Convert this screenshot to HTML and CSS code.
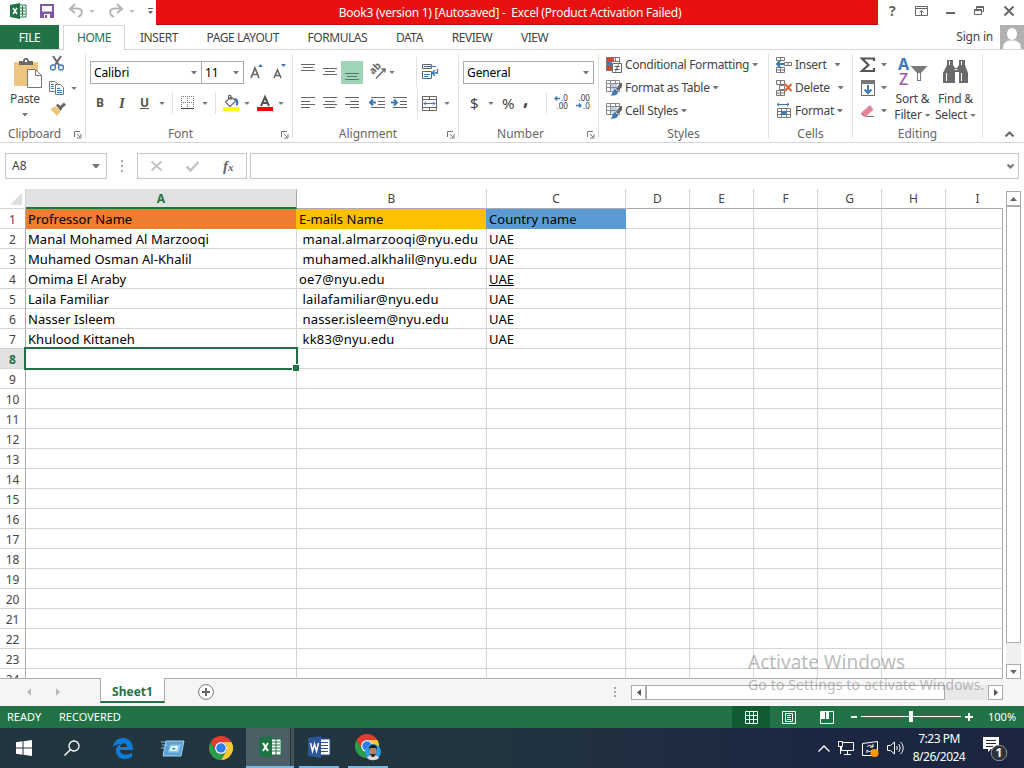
FILE: index.html
```html
<!DOCTYPE html>
<html lang="en">
<head>
<meta charset="utf-8">
<title>Book3 (version 1) [Autosaved] - Excel</title>
<link rel="stylesheet" href="styles.css">
</head>
<body>

<svg class="defs" width="0" height="0">
  <symbol id="chrome" viewBox="0 0 48 48">
    <path fill="#e33b2e" d="M24 12H44.8A24 24 0 0 0 3.2 12L13.6 30A12 12 0 0 1 24 12Z"/>
    <path fill="#fcc934" d="M34.4 30L24 48A24 24 0 0 0 44.8 12H24A12 12 0 0 1 34.4 30Z"/>
    <path fill="#2a9d48" d="M13.6 30L3.2 12A24 24 0 0 0 24 48L34.4 30A12 12 0 0 1 13.6 30Z"/>
    <circle cx="24" cy="24" r="12" fill="#fff"/>
    <circle cx="24" cy="24" r="9.5" fill="#2f7de9"/>
  </symbol>
  <symbol id="launcher" viewBox="0 0 8 8">
    <path d="M.5 6V.5H6M3 3l3 3M7 3v4H3" fill="none" stroke="#777"/>
  </symbol>
  <symbol id="brushed" viewBox="0 0 16 16">
    <path d="M5 4h6v6H5z" fill="#bcd3ea"/>
    <path d="M.5.5h13v11H.5zM.5 3.500h13M.5 7.500h10M4.500.5v11M9.500.5v3" fill="none" stroke="#888"/>
    <path d="M16 3v4l-4 4-2-2 4-6z" fill="#666"/>
    <path d="M9 9l3 3c0 3-4 4-8 3.500 3-1 2-5 5-6.500z" fill="#3d79b8"/>
  </symbol>
</svg>

<header class="titlebar">
  <div class="quick">
    <svg width="17" height="16" viewBox="0 0 17 16"><path d="M9 2h7v12H9z" fill="#fff" stroke="#217346"/><path d="M10 5h5M10 8h5M10 11h5M12.500 3v10" stroke="#217346"/><path d="M0 2l10-2v16L0 14z" fill="#217346"/><path d="M3 5l4 6M7 5l-4 6" stroke="#fff" stroke-width="1.500"/></svg>
    <svg width="14" height="14" viewBox="0 0 14 14"><path d="M1 1h12v12H1z" fill="#fff" stroke="#8256a8" stroke-width="2"/><path d="M0 7.500h14V14H0z" fill="#8256a8"/><path d="M4 10h6v4H4z" fill="#fff"/><path d="M5 11h2v3H5z" fill="#8256a8"/></svg>
    <svg width="14" height="14" viewBox="0 0 14 14"><path d="M6 0L1 5l5 4M1.500 4.500H8c6 0 6.500 6 1 8.500" fill="none" stroke="#b4b4b4" stroke-width="2"/></svg>
    <i class="arrow pale"></i>
    <svg width="14" height="14" viewBox="0 0 14 14"><path d="M8 0l5 5-5 4M12.500 4.500H6c-6 0-6.500 6-1 8.500" fill="none" stroke="#b4b4b4" stroke-width="2"/></svg>
    <i class="arrow pale"></i>
    <svg width="5" height="6" viewBox="0 0 5 6"><path d="M0 .5h5" stroke="#666"/><path d="M0 3h5L2.500 6z" fill="#666"/></svg>
  </div>
  <div class="caption">Book3 (version 1) [Autosaved] -&nbsp; Excel (Product Activation Failed)</div>
  <div class="window-buttons">
    <b>?</b>
    <svg width="13" height="11" viewBox="0 0 13 11"><path d="M.5.5h12v9H.5zM.5 2.500h12M6.500 9V5M4.500 6.500l2-2 2 2" fill="none" stroke="#666"/></svg>
    <svg width="9" height="11" viewBox="0 0 9 11"><path d="M0 7h9" stroke="#666" stroke-width="2"/></svg>
    <svg width="10" height="10" viewBox="0 0 10 10"><path d="M.5 3.500h7v5h-7zM.5 4.500h7M2.500 3V.5h7v5H8M2.500 1.500h7" fill="none" stroke="#666"/></svg>
    <svg width="10" height="10" viewBox="0 0 10 10"><path d="M.5.5l9 9M9.500.5l-9 9" stroke="#666" stroke-width="2"/></svg>
  </div>
</header>

<nav class="tabs">
  <span class="file">FILE</span>
  <span class="active">HOME</span>
  <span>INSERT</span>
  <span>PAGE LAYOUT</span>
  <span>FORMULAS</span>
  <span>DATA</span>
  <span>REVIEW</span>
  <span>VIEW</span>
  <span class="signin">Sign in</span>
  <svg width="24" height="24" viewBox="0 0 24 24"><path d="M0 0h24v24H0z" fill="#b1b1b1"/><ellipse cx="12" cy="9" rx="5" ry="6" fill="#fff"/><path d="M3 24c0-6 2-7 6-8.500h6c4 1.500 6 2.500 6 8.500z" fill="#fff"/></svg>
</nav>

<section class="ribbon">
  <div class="group clipboard">
    <div class="body">
      <div class="paste">
        <svg width="29" height="31" viewBox="0 0 29 31"><path d="M1 4h24v24H1z" fill="#ecc580"/><path d="M6 7V3h4c0-4 6-4 6 0h4v4z" fill="#6a6a6a"/><path d="M12 2h2v2h-2z" fill="#fff"/><path d="M14.500 11.500h8l6 6v12h-14z" fill="#fff" stroke="#777"/><path d="M22.500 11.500v6h6" fill="none" stroke="#777"/></svg>
        <span>Paste</span>
        <i class="arrow"></i>
      </div>
      <div class="clips">
        <svg width="14" height="15" viewBox="0 0 14 15"><path d="M3 0l6 9M11 0L5 9" stroke="#666" stroke-width="2"/><circle cx="3" cy="11.500" r="2.500" fill="none" stroke="#3d79b8" stroke-width="1.300"/><circle cx="11" cy="11.500" r="2.500" fill="none" stroke="#3d79b8" stroke-width="1.300"/></svg>
        <div><svg width="15" height="14" viewBox="0 0 15 14"><path d="M.5.5h5l3 2v8h-8z" fill="#fff" stroke="#777"/><path d="M2 3.500h3M2 5.500h3M2 7.500h3" stroke="#3d79b8"/><path d="M6.500 3.500h5l3 3v7h-8z" fill="#fff" stroke="#777"/><path d="M8 7.500h3M8 9.500h5M8 11.500h5" stroke="#3d79b8"/></svg><i class="arrow"></i></div>
        <svg width="16" height="14" viewBox="0 0 16 14"><path d="M6 4l5 5-4 5-7-7z" fill="#ecc580"/><path d="M6 3l2-1 4 4-1 3z" fill="#555"/><path d="M9 5l5-4.500L16 3l-5 4z" fill="#666"/></svg>
      </div>
    </div>
    <div class="name">Clipboard<svg width="8" height="8"><use href="#launcher"/></svg></div>
  </div>

  <div class="group font">
    <div class="body">
      <div class="row boxes">
        <div class="combo">Calibri<i class="arrow"></i></div>
        <div class="combo">11<i class="arrow"></i></div>
        <svg width="14" height="16" viewBox="0 0 14 16"><path d="M1 14L5 4l4 10M2.500 10.500h5" fill="none" stroke="#666" stroke-width="1.700"/><path d="M8 3l2.500-3L13 3z" fill="#3d79b8"/></svg>
        <svg width="14" height="16" viewBox="0 0 14 16"><path d="M1 14l3.500-8L8 14M2.500 11.500h4" fill="none" stroke="#666" stroke-width="1.600"/><path d="M8 0h5l-2.500 3z" fill="#3d79b8"/></svg>
      </div>
      <div class="row marks">
        <b>B</b><b class="it">I</b><b class="un">U</b><i class="arrow"></i>
        <i class="bar"></i>
        <svg width="14" height="14" viewBox="0 0 14 14"><path d="M.5 0v12M6.500 0v12M12.500 0v12M0 .5h13M0 6.500h13" stroke="#777" stroke-dasharray="1 1"/><path d="M0 12.500h13" stroke="#444"/></svg>
        <i class="arrow"></i>
        <i class="bar"></i>
        <svg width="16" height="16" viewBox="0 0 16 16"><path d="M2.500 7L8 2l5 4-6 5.500zM5.500 5V1.500C5.500-.2 8 0 8 1.500V5" fill="#fff" stroke="#666" stroke-width="1.200"/><path d="M11 3c4 0 5 3 4 7l-2 1V6z" fill="#3d79b8"/><path d="M0 12h16v4H0z" fill="#ff0"/></svg>
        <i class="arrow"></i>
        <svg width="16" height="16" viewBox="0 0 16 16"><path d="M4 11L8 2l4 9M5.500 8h5" fill="none" stroke="#555" stroke-width="2"/><path d="M0 12h16v4H0z" fill="red"/></svg>
        <i class="arrow"></i>
      </div>
    </div>
    <div class="name">Font<svg width="8" height="8"><use href="#launcher"/></svg></div>
  </div>

  <div class="group alignment">
    <div class="body">
      <div class="row vertical">
        <svg width="14" height="16" viewBox="0 0 14 16"><path d="M0 .5h14M2 3.500h10M0 6.500h14" stroke="#666"/></svg>
        <svg width="14" height="16" viewBox="0 0 14 16"><path d="M0 4.500h14M2 7.500h10M0 10.500h14" stroke="#666"/></svg>
        <span class="pressed"><svg width="14" height="16" viewBox="0 0 14 16"><path d="M0 9.500h14M2 12.500h10M0 15.500h14" stroke="#5c7b6b"/></svg></span>
        <svg width="17" height="16" viewBox="0 0 17 16"><text transform="translate(4 11) rotate(-45)" class="orient">ab</text><path d="M7 14.500l9-9.500M12.500 5H16v3.500" fill="none" stroke="#666" stroke-width="1.300"/></svg>
        <i class="arrow"></i>
        <i class="bar"></i>
        <svg width="17" height="16" viewBox="0 0 17 16"><path d="M.5.500h9v4h-9zM.5 7.500h9v7h-9z" fill="none" stroke="#666"/><path d="M2 2.500h12M2 10.500h6M2 12.500h4" stroke="#3d79b8"/><path d="M15.500 5v4h-5M13 6l-3 3 3 3" fill="none" stroke="#3d79b8" stroke-width="1.300"/></svg>
      </div>
      <div class="row horizontal">
        <svg width="14" height="12" viewBox="0 0 14 12"><path d="M0 .5h14M0 4.500h9M0 7.500h14M0 10.500h9" stroke="#666"/></svg>
        <svg width="14" height="12" viewBox="0 0 14 12"><path d="M0 .5h14M2 4.500h10M0 7.500h14M2 10.500h10" stroke="#666"/></svg>
        <svg width="14" height="12" viewBox="0 0 14 12"><path d="M0 .5h14M5 4.500h9M0 7.500h14M5 10.500h9" stroke="#666"/></svg>
        <svg width="16" height="12" viewBox="0 0 16 12"><path d="M2 .5h14M9 4.500h7M9 7.500h7M2 10.500h14" stroke="#666"/><path d="M1 5.500h6M4 2.500l-3 3 3 3" fill="none" stroke="#3d79b8" stroke-width="2"/></svg>
        <svg width="16" height="12" viewBox="0 0 16 12"><path d="M2 .5h14M9 4.500h7M9 7.500h7M2 10.500h14" stroke="#666"/><path d="M0 5.500h6M3 2.500l3 3-3 3" fill="none" stroke="#3d79b8" stroke-width="2"/></svg>
        <i class="bar"></i>
        <svg width="15" height="15" viewBox="0 0 15 15"><path d="M.5.5h14v14H.5zM.5 3.500h14M.5 11.500h14M7.500.5v3M7.500 11.500v3" fill="none" stroke="#666"/><path d="M2 7.500h11M4 5.500l-2 2 2 2M11 5.500l2 2-2 2" fill="none" stroke="#3d79b8"/></svg>
        <i class="arrow"></i>
      </div>
    </div>
    <div class="name">Alignment<svg width="8" height="8"><use href="#launcher"/></svg></div>
  </div>

  <div class="group number">
    <div class="body">
      <div class="row boxes"><div class="combo">General<i class="arrow"></i></div></div>
      <div class="row formats">
        <span>$</span><i class="arrow"></i><span>%</span><b>,</b>
        <i class="bar"></i>
        <svg width="15" height="14" viewBox="0 0 15 14"><text x="7" y="6" class="digits">.0</text><text x="2.500" y="14" class="digits">.00</text><path d="M1 3.500h5M3 1.500l-2 2 2 2" fill="none" stroke="#3d79b8" stroke-width="1.300"/></svg>
        <svg width="15" height="14" viewBox="0 0 15 14"><text x="2.500" y="6" class="digits">.00</text><text x="7" y="14" class="digits">.0</text><path d="M0 10.500h5M3 8.500l2 2-2 2" fill="none" stroke="#3d79b8" stroke-width="1.300"/></svg>
      </div>
    </div>
    <div class="name">Number<svg width="8" height="8"><use href="#launcher"/></svg></div>
  </div>

  <div class="group styles">
    <div class="body list">
      <div><svg width="16" height="16" viewBox="0 0 16 16"><path d="M.5.5h13v13H.5zM.5 4.500h13M.5 8.500h6M5.500.5v13M9.500.5v4" fill="none" stroke="#777"/><path d="M1 1h7v3H1zM1 9h4v4H1z" fill="#d24726"/><path d="M1 5h5v3H1z" fill="#3d79b8"/><path d="M6.500 6.500h9v9h-9z" fill="#fff" stroke="#666"/><path d="M8.500 9.500h5M8.500 12.500h5M12.500 7.500l-3 7" stroke="#555"/></svg><span>Conditional Formatting</span><i class="arrow"></i></div>
      <div><svg width="16" height="16"><use href="#brushed"/></svg><span>Format as Table</span><i class="arrow"></i></div>
      <div><svg width="16" height="16"><use href="#brushed"/></svg><span>Cell Styles</span><i class="arrow"></i></div>
    </div>
    <div class="name">Styles</div>
  </div>

  <div class="group cells">
    <div class="body list">
      <div><svg width="16" height="16" viewBox="0 0 16 16"><path d="M.5.500h8v3h-8zM4.500.5v3M.5 10.500h8v5h-8zM4.500 10.500v5M.5 13h8M8.500 5.500h7v3h-7zM12 5.500v3" fill="none" stroke="#777"/><path d="M1 7h7M4 4L1 7l3 3" fill="none" stroke="#3d79b8" stroke-width="2"/></svg><span>Insert</span><i class="arrow"></i></div>
      <div><svg width="16" height="16" viewBox="0 0 16 16"><path d="M.5.500h8v4h-8zM4.500.5v4M.5 10.500h8v5h-8zM4.500 10.500v5M.5 13h8M3.500 5.500h5v4h-5z" fill="none" stroke="#777"/><path d="M9 4l6.500 7M15.500 4L9 11" stroke="#e0603c" stroke-width="2"/></svg><span>Delete</span><i class="arrow"></i></div>
      <div><svg width="16" height="16" viewBox="0 0 16 16"><path d="M1 1.500h12M3 0L1 1.500 3 3M11 0l2 1.500L11 3" fill="none" stroke="#3d79b8"/><path d="M1.500 5.500h13v9h-13zM1.500 8.500h13M1.500 11.500h13M5.500 5.500v9M10.500 5.500v9" fill="none" stroke="#777"/><path d="M5 8h5v4H5z" fill="#3d79b8"/></svg><span>Format</span><i class="arrow"></i></div>
    </div>
    <div class="name">Cells</div>
  </div>

  <div class="group editing">
    <div class="body">
      <div class="list">
        <div><svg width="16" height="16" viewBox="0 0 16 16"><path d="M14 4V1.500H2L8.500 8 2 14h12v-3" fill="none" stroke="#555" stroke-width="2.200"/></svg><i class="arrow"></i></div>
        <div><svg width="16" height="16" viewBox="0 0 16 16"><path d="M1.500.5h13v15h-13z" fill="#fff" stroke="#666"/><path d="M1 0h14v4H1z" fill="#777"/><path d="M8 5v8M4.500 9.500L8 13l3.500-3.500" fill="none" stroke="#3d79b8" stroke-width="2"/></svg><i class="arrow"></i></div>
        <div><svg width="16" height="16" viewBox="0 0 16 16"><path d="M2 9l8-7 3.500 4.500-7.500 7z" fill="#e8829b"/><path d="M2 9l4 4.500H4L1 11z" fill="#d05c7b"/><path d="M6 13.500h8" stroke="#777"/></svg><i class="arrow"></i></div>
      </div>
      <div class="big">
        <svg width="30" height="28" viewBox="0 0 30 28"><text x="0" y="12" class="letter-a">A</text><text x="1" y="27" class="letter-z">Z</text><path d="M12.500 8h17L23 15v8h-4v-8z" fill="#7a7a7a"/><path d="M20 15h2v7h-2z" fill="#fff"/></svg>
        <span>Sort &amp;</span><span>Filter<i class="arrow"></i></span>
      </div>
      <div class="big">
        <svg width="28" height="28" viewBox="0 0 28 28"><path d="M5 2h6v5l2 3h2l2-3V2h6v5l3 8v10h-9V14h-4v11H1V15l4-8z" fill="#6a6a6a"/><path d="M4.500 15v8M19.500 15v8M7.500 3v4M19.500 3v4M12.500 11.500h3" stroke="#fff"/></svg>
        <span>Find &amp;</span><span>Select<i class="arrow"></i></span>
      </div>
    </div>
    <div class="name">Editing</div>
  </div>
  <svg class="collapse" width="9" height="7" viewBox="0 0 9 7"><path d="M.5 5.500l4-4 4 4" fill="none" stroke="#666" stroke-width="2"/></svg>
</section>

<section class="formula">
  <div class="box namebox">A8<i class="arrow"></i></div>
  <svg width="2" height="12" viewBox="0 0 2 12"><path d="M0 0h2v2H0zM0 5h2v2H0zM0 10h2v2H0z" fill="#aaa"/></svg>
  <div class="box entry">
    <svg width="11" height="10" viewBox="0 0 11 10"><path d="M.5.5l10 9M10.500.5l-10 9" stroke="#c3c3c3" stroke-width="2"/></svg>
    <svg width="13" height="11" viewBox="0 0 13 11"><path d="M.5 5.500l4 4 8-8.500" fill="none" stroke="#c3c3c3" stroke-width="2.500"/></svg>
    <span class="fx">f<small>x</small></span>
  </div>
  <div class="box input"><svg width="7" height="5" viewBox="0 0 7 5"><path d="M.5.5l3 3 3-3" fill="none" stroke="#777" stroke-width="2"/></svg></div>
</section>

<main class="sheet">
  <div class="grid">
    <table>
      <colgroup><col class="c-head"><col class="c-a"><col class="c-b"><col class="c-c"><col class="c-n"><col class="c-n"><col class="c-n"><col class="c-n"><col class="c-n"><col class="c-last"></colgroup>
      <thead>
        <tr><th><svg width="12" height="12" viewBox="0 0 12 12"><path d="M12 0v12H0z" fill="#dedede"/></svg></th><th class="on">A</th><th>B</th><th>C</th><th>D</th><th>E</th><th>F</th><th>G</th><th>H</th><th>I</th></tr>
      </thead>
      <tbody>
        <tr><th>1</th><td class="orange">Profressor Name</td><td class="gold">E-mails Name</td><td class="blue">Country name</td><td></td><td></td><td></td><td></td><td></td><td></td></tr>
        <tr><th>2</th><td>Manal Mohamed Al Marzooqi</td><td class="mail">&nbsp;manal.almarzooqi@nyu.edu</td><td>UAE</td><td></td><td></td><td></td><td></td><td></td><td></td></tr>
        <tr><th>3</th><td>Muhamed Osman Al-Khalil</td><td class="mail">&nbsp;muhamed.alkhalil@nyu.edu</td><td>UAE</td><td></td><td></td><td></td><td></td><td></td><td></td></tr>
        <tr><th>4</th><td>Omima El Araby</td><td class="mail">oe7@nyu.edu</td><td><u>UAE</u></td><td></td><td></td><td></td><td></td><td></td><td></td></tr>
        <tr><th>5</th><td>Laila Familiar</td><td class="mail">&nbsp;lailafamiliar@nyu.edu</td><td>UAE</td><td></td><td></td><td></td><td></td><td></td><td></td></tr>
        <tr><th>6</th><td>Nasser Isleem</td><td class="mail">&nbsp;nasser.isleem@nyu.edu</td><td>UAE</td><td></td><td></td><td></td><td></td><td></td><td></td></tr>
        <tr><th>7</th><td>Khulood Kittaneh</td><td class="mail">&nbsp;kk83@nyu.edu</td><td>UAE</td><td></td><td></td><td></td><td></td><td></td><td></td></tr>
        <tr><th class="on">8</th><td class="selected"></td><td></td><td></td><td></td><td></td><td></td><td></td><td></td><td></td></tr>
        <tr><th>9</th><td></td><td></td><td></td><td></td><td></td><td></td><td></td><td></td><td></td></tr>
        <tr><th>10</th><td></td><td></td><td></td><td></td><td></td><td></td><td></td><td></td><td></td></tr>
        <tr><th>11</th><td></td><td></td><td></td><td></td><td></td><td></td><td></td><td></td><td></td></tr>
        <tr><th>12</th><td></td><td></td><td></td><td></td><td></td><td></td><td></td><td></td><td></td></tr>
        <tr><th>13</th><td></td><td></td><td></td><td></td><td></td><td></td><td></td><td></td><td></td></tr>
        <tr><th>14</th><td></td><td></td><td></td><td></td><td></td><td></td><td></td><td></td><td></td></tr>
        <tr><th>15</th><td></td><td></td><td></td><td></td><td></td><td></td><td></td><td></td><td></td></tr>
        <tr><th>16</th><td></td><td></td><td></td><td></td><td></td><td></td><td></td><td></td><td></td></tr>
        <tr><th>17</th><td></td><td></td><td></td><td></td><td></td><td></td><td></td><td></td><td></td></tr>
        <tr><th>18</th><td></td><td></td><td></td><td></td><td></td><td></td><td></td><td></td><td></td></tr>
        <tr><th>19</th><td></td><td></td><td></td><td></td><td></td><td></td><td></td><td></td><td></td></tr>
        <tr><th>20</th><td></td><td></td><td></td><td></td><td></td><td></td><td></td><td></td><td></td></tr>
        <tr><th>21</th><td></td><td></td><td></td><td></td><td></td><td></td><td></td><td></td><td></td></tr>
        <tr><th>22</th><td></td><td></td><td></td><td></td><td></td><td></td><td></td><td></td><td></td></tr>
        <tr><th>23</th><td></td><td></td><td></td><td></td><td></td><td></td><td></td><td></td><td></td></tr>
        <tr><th>24</th><td></td><td></td><td></td><td></td><td></td><td></td><td></td><td></td><td></td></tr>
      </tbody>
    </table>
  </div>
  <div class="vscroll">
    <span class="step"><svg width="7" height="4" viewBox="0 0 7 4"><path d="M0 4h7L3.500 0z" fill="#666"/></svg></span>
    <span class="thumb"></span>
    <span class="track"></span>
    <span class="step"><svg width="7" height="4" viewBox="0 0 7 4"><path d="M0 0h7L3.500 4z" fill="#666"/></svg></span>
  </div>
</main>

<section class="sheetbar">
  <div class="nav"><svg width="4" height="8" viewBox="0 0 4 8"><path d="M4 0v8L0 4z" fill="#bbb"/></svg><svg width="4" height="8" viewBox="0 0 4 8"><path d="M0 0v8l4-4z" fill="#bbb"/></svg></div>
  <div class="sheettab">Sheet1</div>
  <div class="add"><svg width="16" height="16" viewBox="0 0 16 16"><circle cx="8" cy="8" r="7.400" fill="#fff" stroke="#777"/><path d="M8 4v8M4 8h8" stroke="#666" stroke-width="2"/></svg></div>
  <svg class="dots" width="2" height="10" viewBox="0 0 2 10"><path d="M0 0h2v2H0zM0 4h2v2H0zM0 8h2v2H0z" fill="#aaa"/></svg>
  <div class="hscroll">
    <span class="step"><svg width="4" height="7" viewBox="0 0 4 7"><path d="M4 0v7L0 3.500z" fill="#555"/></svg></span>
    <span class="thumb"></span>
    <span class="track"></span>
    <span class="step"><svg width="4" height="7" viewBox="0 0 4 7"><path d="M0 0v7l4-3.500z" fill="#555"/></svg></span>
  </div>
</section>

<footer class="status">
  <span class="ready">READY</span><span>RECOVERED</span>
  <div class="views">
    <span class="current"><svg width="13" height="13" viewBox="0 0 13 13"><path d="M.5.5h12v12H.5zM.5 4.500h12M.5 8.500h12M4.500.5v12M8.500.5v12" fill="none" stroke="#fff"/></svg></span>
    <span><svg width="14" height="13" viewBox="0 0 14 13"><path d="M.5.5h13v12H.5zM3.500 2.500h7v8h-7zM5 4.500h4M5 6.500h4M5 8.500h4" fill="none" stroke="#fff"/></svg></span>
    <span><svg width="14" height="13" viewBox="0 0 14 13"><path d="M.5.5h13v12H.5z" fill="none" stroke="#fff"/><path d="M1 1h4v7H1zM6 1h3v7H6z" fill="#fff"/></svg></span>
  </div>
  <svg class="zoom" width="122" height="12" viewBox="0 0 122 12"><path d="M0 6h6M114 6h8M118 2v8" stroke="#fff" stroke-width="2"/><path d="M10 5.500h100" stroke="#fff"/><path d="M58 0h4v11h-4z" fill="#fff"/></svg>
  <span class="percent">100%</span>
</footer>

<footer class="taskbar">
  <span><svg width="16" height="16" viewBox="0 0 16 16"><path d="M0 2.300l6.500-1v6.200H0zM7.500 1.200L16 0v7.500H7.500zM0 8.500h6.500v6.200l-6.500-1zM7.500 8.500H16V16l-8.500-1.200z" fill="#fff"/></svg></span>
  <span><svg width="16" height="16" viewBox="0 0 16 16"><circle cx="10" cy="6" r="5" fill="none" stroke="#fff" stroke-width="1.300"/><path d="M6.500 9.500L.5 15.500" stroke="#fff" stroke-width="1.500"/></svg></span>
  <span class="edge"><svg width="20" height="21" viewBox="0 0 20 21"><path d="M0 9C1 3 5 0 10 0c7 0 10 5 10 12H7c0 5 7 6 12 3v4c-7 4-16 2-16-6 0-4 2-6 5-7-3 0-6 1-8 3zM7 9h7c0-5-6-5-7 0z" fill="#0f7bd9"/></svg></span>
  <span><svg width="24" height="17" viewBox="0 0 24 17"><path d="M5 1h18l-3 15H2z" fill="#5ba3d6" stroke="#9fd0ef"/><path d="M9 4.500h11l-2 8H7z" fill="#8cc4ea"/><path d="M10 6h7l-1 5H8.500z" fill="#e6f3fb"/><path d="M11.500 8h3l-.5 1.500h-3z" fill="#3983c4"/><path d="M0 2h6M1 5h5M0 8h4" stroke="#8fc2e5"/></svg></span>
  <span class="browser"><svg width="24" height="24"><use href="#chrome"/></svg></span>
  <span class="open front"><svg width="23" height="22" viewBox="0 0 23 22"><path d="M12 3h10v16H12z" fill="#fff" stroke="#217346"/><path d="M13 6h8M13 9h8M13 12h8M13 15h8M17 3v16" stroke="#217346"/><path d="M0 2l13-2v22L0 20z" fill="#1e7444"/><path d="M4 7l5 8M9 7l-5 8" stroke="#fff" stroke-width="2"/></svg></span>
  <span class="open"><svg width="23" height="22" viewBox="0 0 23 22"><path d="M12 3h10v16H12z" fill="#fff" stroke="#2b579a"/><path d="M13 6.500h7M13 9.500h7M13 12.500h7M13 15.500h7" stroke="#2b579a"/><path d="M0 2l13-2v22L0 20z" fill="#2b579a"/><path d="M2.500 7l2 8 2-7 2 7 2-8" fill="none" stroke="#fff" stroke-width="1.500"/></svg></span>
  <span class="open"><svg width="26" height="26" viewBox="0 0 26 26"><use href="#chrome" width="24" height="24"/><circle cx="18" cy="18" r="8" fill="#2b9be0"/><path d="M12 24c1-4 11-4 12 0-3 3-9 3-12 0z" fill="#d8d8e0"/><ellipse cx="18" cy="17.500" rx="3.500" ry="5" fill="#b97f62"/><path d="M14 16c-1-7 9-7 8 0l-1-2h-6z" fill="#171717"/><path d="M15 20h6l-2 3h-2z" fill="#3a2a25"/></svg></span>
  <div class="tray">
    <svg width="12" height="7" viewBox="0 0 12 7"><path d="M.5 6.500L6 1l5.500 5.500" fill="none" stroke="#fff" stroke-width="1.300"/></svg>
    <svg width="16" height="14" viewBox="0 0 16 14"><path d="M5 1.500h10.500v8h-12V6M9.500 9.500v4M6 13.500h7M.5.5h4v5h-4zM2.500 5v8" fill="none" stroke="#fff"/></svg>
    <svg width="17" height="17" viewBox="0 0 17 17"><path d="M.5 3.500l15-2v14H.5z" fill="none" stroke="#fff"/><path d="M5 7c1-2 4-2 6 0V4M11 7H8M10 10c-1 2-4 2-5 0v3" fill="none" stroke="#fff"/><circle cx="12.500" cy="13" r="4" fill="#ff9800"/></svg>
    <svg width="17" height="14" viewBox="0 0 17 14"><path d="M.5 4.500h3l4-3.500v12l-4-3.500h-3zM9.500 5c1 1 1 3 0 4M11.500 3c2 2 2 6 0 8M13.500 1c3.500 3 3.500 9 0 12" fill="none" stroke="#fff"/></svg>
    <div class="clock">7:23 PM<br>8/26/2024</div>
    <svg width="25" height="25" viewBox="0 0 25 25"><path d="M0 1h16v12H8l-3 3v-3H0z" fill="#fff"/><path d="M3 4.500h10M3 7.500h10M3 10.500h7" stroke="#1c2a40"/><circle cx="16" cy="17" r="7.800" fill="#2c333c" stroke="#8c929a"/><text x="12.500" y="21" class="count">1</text></svg>
  </div>
</footer>

<div class="activate"><strong>Activate Windows</strong><span>Go to Settings to activate Windows.</span></div>

</body>
</html>
```

FILE: styles.css
```css
* {
  box-sizing: border-box;
}

body {
  margin: 0;
  width: 1024px;
  height: 768px;
  overflow: hidden;
  position: relative;
  background: #fff;
  color: #444;
  font-family: "Noto Sans", "Open Sans", sans-serif;
  font-size: 12px;
  line-height: 16px;
  white-space: nowrap;
}

svg {
  display: block;
  flex: none;
  overflow: visible;
}

.defs {
  position: absolute;
}

.arrow {
  display: inline-block;
  flex: none;
  width: 6px;
  height: 3px;
  background: #777;
  clip-path: polygon(0 0, 100% 0, 60% 100%, 40% 100%);
}

.arrow.pale {
  background: #bbb;
}

/* title bar */
.titlebar {
  display: flex;
  height: 25px;
}

.quick {
  width: 156px;
  padding-left: 10px;
  display: grid;
  grid-template-columns: 30px 29px 20px 20px 20px 19px 5px;
  align-items: center;
  height: 22px;
}

.caption {
  width: 722px;
  background: #e81010;
  border-bottom: 1px solid #c00d0d;
  color: #fff;
  text-align: center;
  line-height: 26px;
  padding-right: 14px;
  letter-spacing: -.25px;
}

.window-buttons {
  display: grid;
  grid-template-columns: 26px 31px 28px 30px 10px;
  align-items: center;
  padding-left: 11px;
  height: 22px;
  color: #666;
}

.window-buttons b {
  font-size: 14px;
}

/* ribbon tabs */
.tabs {
  display: flex;
  height: 25px;
  border-bottom: 1px solid #d4d4d4;
  line-height: 25px;
  letter-spacing: -.45px;
}

.tabs span {
  margin-right: 28.7px;
}

.tabs .file {
  width: 59px;
  margin-right: 4px;
  background: #217346;
  color: #fff;
  text-align: center;
}

.tabs .active {
  width: 62px;
  height: 25px;
  margin-right: 15px;
  border: 1px solid #d4d4d4;
  border-bottom: 0;
  background: #fff;
  color: #217346;
  text-align: center;
  line-height: 24px;
}

.tabs .signin {
  margin: 0 7px 0 auto;
  line-height: 24px;
  letter-spacing: -.2px;
}

/* ribbon */
.ribbon {
  display: flex;
  height: 93px;
  padding-top: 4px;
  border-bottom: 1px solid #d4d4d4;
}

.group {
  height: 84px;
  border-right: 1px solid #e1e1e1;
  display: flex;
  flex-direction: column;
}

.group .body {
  flex: 1;
}

.name {
  display: flex;
  justify-content: center;
  align-items: center;
  height: 16px;
  position: relative;
  top: 4px;
  color: #666;
}

.name svg {
  position: absolute;
  right: 3px;
  top: 5px;
}

.bar {
  width: 1px;
  height: 22px;
  background: #e1e1e1;
}

.row {
  display: grid;
  grid-auto-rows: 22px;
  align-items: center;
  height: 22px;
}

.combo {
  display: flex;
  align-items: center;
  justify-content: space-between;
  height: 23px;
  padding: 0 4px 0 3px;
  border: 1px solid #ababab;
  color: #000;
  letter-spacing: -.1px;
}

.clipboard {
  width: 86px;
}

.clipboard .name {
  padding-right: 16px;
  letter-spacing: -.2px;
}

.clipboard .body {
  display: flex;
}

.paste {
  width: 50px;
  padding-top: 4px;
  display: flex;
  flex-direction: column;
  align-items: center;
  letter-spacing: -.2px;
}

.paste svg {
  margin-left: 4px;
}

.paste span {
  margin-top: 2px;
}

.paste .arrow {
  margin-top: 6px;
}

.clips {
  display: grid;
  grid-template-rows: 23px 23px 20px;
  padding-top: 2px;
}

.clips div {
  display: flex;
  align-items: center;
  gap: 7px;
  margin: -5px 0 0 -1px;
}

.font {
  width: 207px;
}

.font .name {
  padding-right: 17px;
}

.boxes {
  margin: 7px 0 9px 4px;
  align-items: start;
}

.font .boxes {
  grid-template-columns: 112px 42px 23px 14px;
}

.font .boxes > .combo + .combo {
  border-left-width: 0;
}

.font .boxes svg {
  margin: 3px 0 0 6px;
}

.marks {
  grid-template-columns: 22px 22px 19px 13px 9px 21px 13px 8px 21px 13px 21px 6px;
  padding-left: 10px;
}

.marks b {
  font-size: 12px;
  color: #555;
}

.marks .it {
  font-style: italic;
  font-family: "Liberation Serif", serif;
  font-size: 15px;
  padding-left: 1px;
}

.marks .un {
  text-decoration: underline;
}

.alignment {
  width: 166px;
}

.alignment .name {
  padding-right: 15px;
}

.vertical {
  grid-template-columns: 22px 18px 28px 20px 26px 7px 17px;
  padding-left: 8px;
  margin: 7px 0 9px;
}

.vertical .bar,
.horizontal .bar {
  justify-self: end;
  height: 30px;
  margin-right: 5px;
}

.horizontal .bar {
  margin-right: 4px;
}

.pressed {
  width: 22px;
  height: 23px;
  padding: 3px 4px;
  background: #9fd5b7;
}

.orient {
  font: bold 10px "Noto Sans", sans-serif;
  fill: #666;
}

.horizontal {
  grid-template-columns: 22px 22px 24px 22px 25px 6px 22px 6px;
  padding-left: 8px;
}

.number {
  width: 140px;
}

.number .name {
  padding-right: 16px;
}

.number .combo {
  width: 131px;
}

.formats {
  grid-template-columns: 18px 14px 21px 23px 8px 22px 15px;
  padding-left: 11px;
}

.formats span {
  font-size: 15px;
}

.formats b {
  font-size: 19px;
  line-height: 10px;
  padding-bottom: 10px;
}

.formats svg {
  margin-top: -2px;
}

.digits {
  font: 8px "Noto Sans", sans-serif;
  fill: #333;
}

.styles {
  width: 170px;
}

.body.list,
.editing .list {
  margin-top: -1px;
}

.list > div {
  display: flex;
  align-items: center;
  height: 23px;
}

.styles .list > div {
  padding-left: 7px;
  letter-spacing: -.3px;
}

.list span {
  margin: 0 3px;
}

.cells {
  width: 84px;
}

.cells .list > div {
  padding-left: 7px;
  letter-spacing: -.3px;
}

.cells .list > div:first-child .arrow {
  margin-left: 5px;
}

.cells .list > div:nth-child(2) .arrow {
  margin-left: 5px;
}

.editing {
  width: 130px;
}

.editing .body {
  display: flex;
}

.editing .list {
  width: 38px;
  padding-left: 7px;
}

.editing .list .arrow {
  margin-left: 5px;
}

.big {
  display: flex;
  flex-direction: column;
  align-items: center;
  width: 43px;
  padding-top: 4px;
  margin-bottom: -1px;
  letter-spacing: -.2px;
}

.big svg {
  margin-bottom: 5px;
}

.big span {
  display: flex;
  align-items: center;
  gap: 3px;
}

.letter-a {
  font: bold 16px "Noto Sans", sans-serif;
  fill: #3d79b8;
}

.letter-z {
  font: 500 16px "Noto Sans", sans-serif;
  fill: #9659b5;
}

.collapse {
  margin: 77px 0 0 22px;
}

/* formula bar */
.formula {
  display: flex;
  align-items: center;
  height: 46px;
  padding: 0 5px;
}

.box {
  display: flex;
  align-items: center;
  height: 26px;
  border: 1px solid #c6c6c6;
}

.namebox {
  width: 102px;
  margin-right: 14px;
  padding: 0 6px;
  justify-content: space-between;
}

.namebox .arrow {
  width: 8px;
  height: 4px;
}

.entry {
  width: 110px;
  margin: 0 3px 0 14px;
  padding-left: 13px;
  gap: 24px;
}

.fx {
  font: italic bold 15px "Liberation Serif", serif;
  color: #666;
}

.fx small {
  font-size: 11px;
}

.input {
  flex: 1;
  justify-content: flex-end;
  padding-right: 4px;
}

/* worksheet */
.sheet {
  display: flex;
  height: 490px;
}

.grid {
  width: 1003px;
  height: 490px;
  overflow: hidden;
  border-bottom: 1px solid #ababab;
}

.grid table {
  table-layout: fixed;
  width: 1003px;
  border-collapse: separate;
  border-spacing: 0;
}

.c-head { width: 26px; }
.c-a { width: 271px; }
.c-b { width: 190px; }
.c-c { width: 139px; }
.c-n { width: 64px; }
.c-last { width: 57px; }

.grid th,
.grid td {
  height: 20px;
  padding: 2px 0 0;
  border: 0 solid #d4d4d4;
  border-width: 0 1px 1px 0;
  line-height: 17px;
}

.grid th {
  font-size: 12px;
  font-weight: normal;
  text-align: center;
}

.grid thead th {
  padding-top: 0;
  border-bottom-color: #ababab;
  line-height: 19px;
}

.grid thead th:first-child {
  padding-left: 10px;
  border-color: #d4d4d4;
}

.grid thead th:last-child {
  border-right: 0;
  padding-left: 6px;
}

.grid tbody th {
  border-right-color: #ababab;
}

.grid th.on {
  background: #e1e1e1;
  color: #217346;
  font-weight: bold;
}

.grid thead th.on {
  border-bottom: 2px solid #217346;
  border-right-color: #ababab;
  padding-top: 1px;
  line-height: 17px;
}

.grid td {
  padding-left: 2px;
  color: #000;
  font-size: 13px;
  letter-spacing: .05px;
}

.grid .mail {
  letter-spacing: .17px;
}

.grid td:last-child {
  border-right-color: #ababab;
}

.grid .orange {
  background: #ed7d31;
  border-color: #ffc000;
  border-bottom-color: #ed7d31;
}

.grid .gold {
  background: #ffc000;
  border-right-color: #5b9bd5;
  border-bottom-color: #ffc000;
}

.grid .blue {
  background: #5b9bd5;
  border-color: #5b9bd5;
}

.grid .selected {
  position: relative;
}

.selected::before {
  content: "";
  position: absolute;
  inset: -2px;
  border: 2px solid #217346;
}

.selected::after {
  content: "";
  position: absolute;
  right: -3px;
  bottom: -3px;
  width: 6px;
  height: 6px;
  border: solid #fff;
  border-width: 1px 0 0 1px;
  background: #217346;
}

.vscroll {
  width: 15px;
  margin: 2px 0 0 3px;
  display: flex;
  flex-direction: column;
}

.step {
  display: flex;
  align-items: center;
  justify-content: center;
  width: 15px;
  height: 15px;
  border: 1px solid #ababab;
  background: #fff;
}

.vscroll .thumb {
  height: 437px;
  border: 1px solid #ababab;
}

.vscroll .track {
  flex: 1;
  background: #f0f0f0;
}

/* sheet tabs */
.sheetbar {
  display: flex;
  height: 27px;
  background: #f5f5f5;
}

.nav {
  width: 100px;
  display: flex;
  align-items: center;
  gap: 25px;
  padding: 0 0 2px 27px;
}

.sheettab {
  width: 65px;
  height: 25px;
  margin-top: -1px;
  position: relative;
  background: #fff;
  border: 1px solid #ababab;
  border-top: 0;
  border-bottom: 2px solid #217346;
  color: #217346;
  font-weight: bold;
  text-align: center;
  line-height: 27px;
}

.add {
  margin: 5px 0 0 33px;
}

.dots {
  margin: 8px 15px 0 auto;
}

.hscroll {
  display: flex;
  width: 372px;
  height: 15px;
  margin: 6px 21px 0 0;
}

.hscroll .thumb {
  width: 299px;
  border: 1px solid #ababab;
  background: #fff;
}

.hscroll .track {
  flex: 1;
  background: #e8e8e8;
}

/* status bar */
.status {
  display: flex;
  align-items: center;
  height: 22px;
  padding-left: 7px;
  background: #217346;
  color: #fff;
  font-size: 11px;
}

.ready {
  width: 52px;
}

.views {
  display: flex;
  margin-left: auto;
}

.views span {
  width: 38px;
  height: 22px;
  display: flex;
  align-items: center;
  justify-content: center;
}

.views .current {
  background: #0e5c30;
}

.zoom {
  margin: 0 15px 0 5px;
}

.percent {
  width: 36px;
}

/* taskbar */
.taskbar {
  display: flex;
  height: 40px;
  background: linear-gradient(90deg, #22363f 0%, #22353f 45%, #1b2742 80%, #1b2540 100%);
  color: #fff;
}

.taskbar > span {
  width: 48px;
  display: flex;
  align-items: center;
  justify-content: center;
}

.taskbar .edge {
  width: 53px;
}

.taskbar .browser {
  width: 49px;
  padding-right: 2px;
}

.taskbar .open {
  width: 40px;
  margin: 0 4px 0 5px;
  border-bottom: 2px solid #76b9ed;
}

.taskbar .front {
  width: 48px;
  margin: 0;
  background: linear-gradient(90deg, #4c5e66 44px, #263238 44px, #263238 45px, #43545c 45px);
}

.tray {
  display: flex;
  align-items: center;
  margin-left: auto;
  gap: 8px;
  padding-right: 16px;
}

.clock {
  width: 62px;
  margin: 0 5px 0 -4px;
  text-align: center;
  line-height: 18px;
  letter-spacing: -.5px;
}

.count {
  font: bold 12px "Noto Sans", sans-serif;
  fill: #fff;
}

/* watermark drawn over the sheet */
.activate {
  position: absolute;
  left: 748px;
  top: 651px;
  display: flex;
  flex-direction: column;
  color: rgba(130, 130, 130, .55);
}

.activate strong {
  font-weight: normal;
  font-size: 19px;
  line-height: 23px;
}

.activate span {
  font-size: 14px;
  line-height: 22px;
  letter-spacing: .13px;
}
```
